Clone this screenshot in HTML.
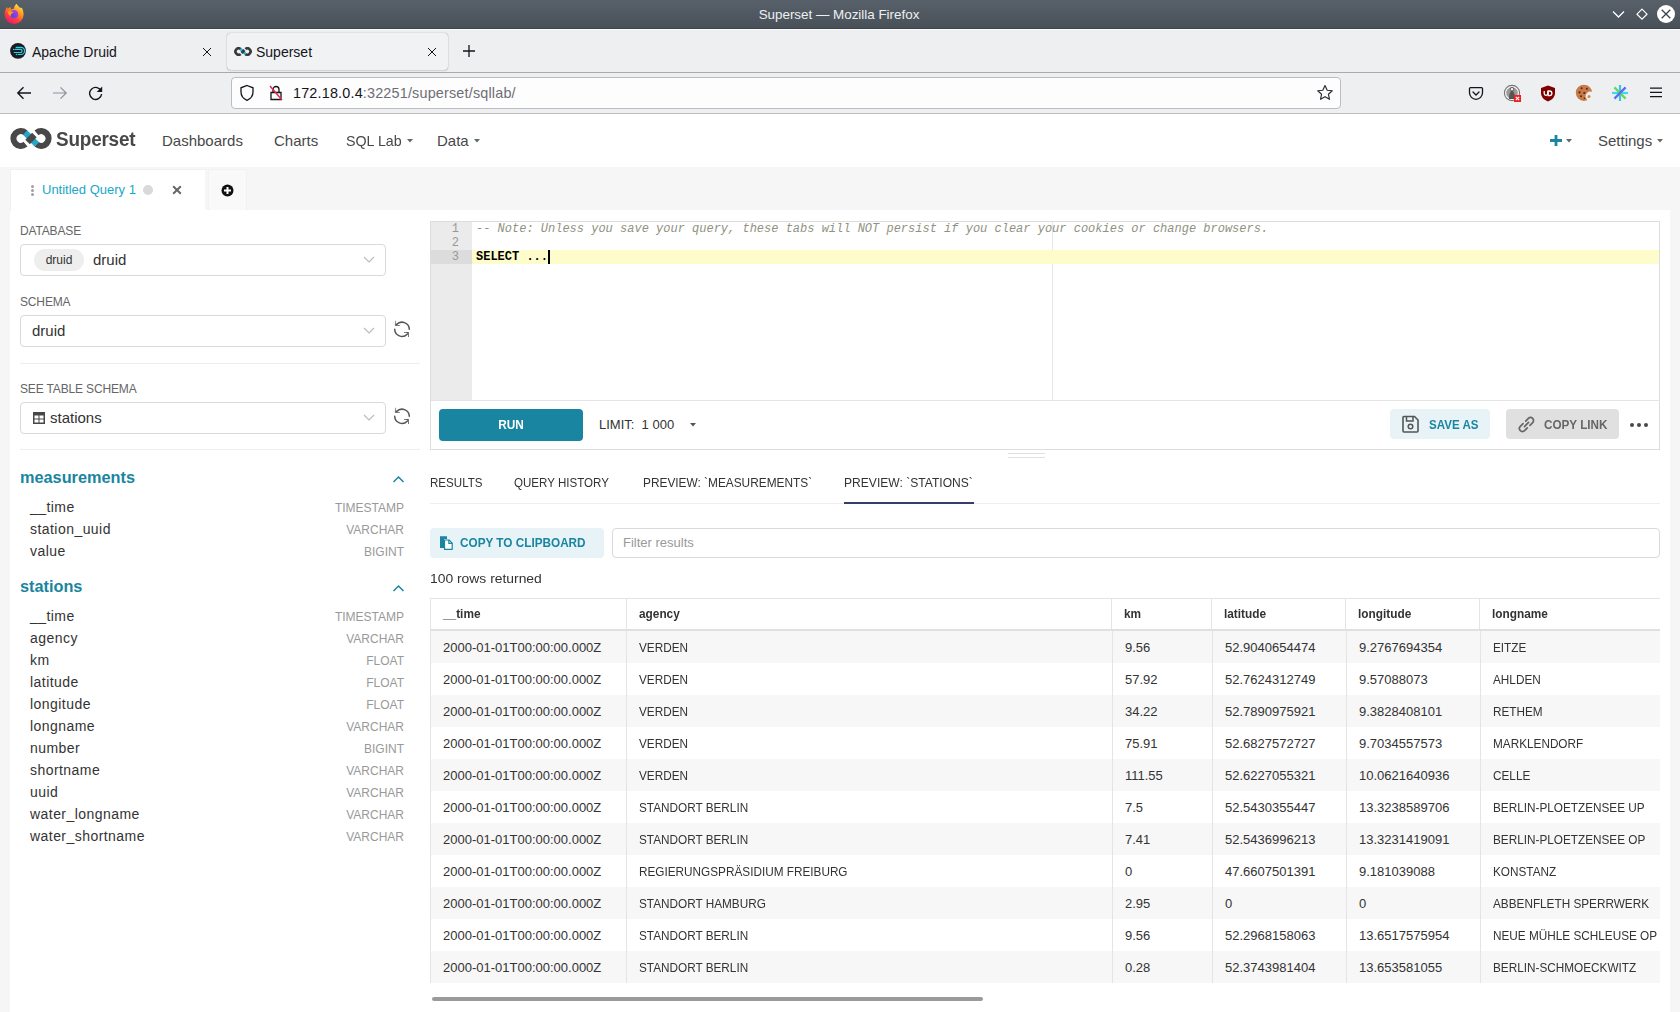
<!DOCTYPE html>
<html><head><meta charset="utf-8">
<style>
*{box-sizing:border-box;margin:0;padding:0}
html,body{width:1680px;height:1012px;overflow:hidden;background:#fff;font-family:"Liberation Sans",sans-serif;color:#333}
.a{position:absolute}
.nw{white-space:nowrap}
svg{display:block}
/* title bar */
#title{left:0;top:0;width:1680px;height:29px;background:linear-gradient(#58616a,#485058);border-bottom:1px solid #3c444c}
#title .t{left:0;width:1680px;top:7px;text-align:center;color:#eef0f2;font-size:13.4px;line-height:16px;padding-right:2px}
/* tab bar */
#tabs{left:0;top:29px;width:1680px;height:44px;background:#eeeff1;border-top:1px solid #fafbfa;border-bottom:1px solid #a9aaab}
#nav{left:0;top:73px;width:1680px;height:41px;background:#eeeff1;border-bottom:1px solid #bcbdc0}
.ff{font-size:14px;line-height:16px;color:#15141a}
#url{left:231px;top:77px;width:1110px;height:32px;background:#fdfdfd;border:1px solid #bcbdc0;border-radius:4px}
/* superset */
#hdr{left:0;top:114px;width:1680px;height:53px;background:#fff}
.menu{font-size:15px;line-height:17px;color:#484848;top:132px}
#qtabs{left:0;top:167px;width:1680px;height:43px;background:#f6f6f6}
#main{left:10px;top:210px;width:1660px;height:802px;background:#fff}
#gl{left:0;top:167px;width:10px;height:845px;background:#f6f6f6}
#gr{left:1670px;top:210px;width:10px;height:802px;background:#f6f6f6}
.lbl{font-size:12px;line-height:14px;color:#666;letter-spacing:-0.15px}
.sel{left:20px;width:366px;height:32px;border:1px solid #d9d9d9;border-radius:4px;background:#fff}
.col{left:30px;font-size:14px;line-height:16px;color:#333;letter-spacing:0.45px}
.typ{right:1276px;font-size:12px;line-height:14px;color:#999;text-align:right}
.tbh{font-size:16.3px;line-height:20px;color:#1985a0;font-weight:bold;left:20px}
/* editor */
#ed{left:430px;top:221px;width:1230px;height:229px;border:1px solid #ddd;background:#fff}
#gut{left:431px;top:222px;width:41px;height:178px;background:#ebebeb}
.mono{font-family:"Liberation Mono",monospace;font-size:12px;line-height:14px}
.ln{left:431px;width:28px;text-align:right;color:#999}
/* results */
.rtab{font-size:13px;line-height:15px;color:#333;top:475px;transform:scaleX(.89);transform-origin:0 0}
.th{font-size:13px;line-height:15px;font-weight:bold;color:#333;top:606px;transform:scaleX(.91);transform-origin:0 0}
.u{transform:scaleX(.905);transform-origin:0 0}
.td{font-size:13px;line-height:15px;color:#333}
.row{left:431px;width:1229px;height:32px}
.vl{width:1px;background:#e4e4e4}
</style></head><body>
<div id="title" class="a">
  <div class="a t">Superset — Mozilla Firefox</div>
  <!-- firefox logo -->
  <svg class="a" style="left:0;top:0" width="30" height="30"><defs><linearGradient id="ffg" x1="0.2" y1="1" x2="0.8" y2="0"><stop offset="0" stop-color="#f0106e"/><stop offset="0.35" stop-color="#ff4040"/><stop offset="0.65" stop-color="#ff9a1a"/><stop offset="1" stop-color="#ffe84a"/></linearGradient><radialGradient id="ffp" cx="0.4" cy="0.7" r="0.7"><stop offset="0" stop-color="#5a48d8"/><stop offset="1" stop-color="#b43ce8"/></radialGradient></defs>
<path d="M16.5 3.8 L19.5 7.5 L22 8 C23 10 23.6 12.5 23.6 14.6 A9.5 9.5 0 0 1 4.6 14.6 C4.6 11.5 5.6 9 7 7 L7.8 8.8 L10.2 7 L11 9.5 C12 9 13 8.8 13.8 8.8 C14.2 6.5 15.2 5 16.5 3.8 Z" fill="url(#ffg)"/>
<circle cx="14" cy="14.2" r="4.3" fill="url(#ffp)"/>
<path d="M7.5 11.5 C9.5 11 12 11.5 13.8 12.6 L11.5 13.5 C10.5 14.5 10.5 15.5 10.8 16.5 C9 15.5 8 13.5 7.5 11.5 Z" fill="#ffa010"/></svg>
  <svg class="a" style="left:1612px;top:10px" width="13" height="9"><path d="M1 1.5 L6.5 7 L12 1.5" stroke="#fff" stroke-width="1.3" fill="none"/></svg>
  <svg class="a" style="left:1635px;top:7px" width="14" height="14"><path d="M7 2.2 L12 7.2 L7 12.2 L2 7.2 Z" stroke="#fff" stroke-width="1.2" fill="none"/></svg>
  <div class="a" style="left:1657px;top:5px;width:18px;height:18px;border-radius:50%;background:#fff"></div>
  <svg class="a" style="left:1657px;top:5px" width="18" height="18"><path d="M4.7 4.7 L13.3 13.3 M13.3 4.7 L4.7 13.3" stroke="#3a4149" stroke-width="1.3"/></svg>
</div>
<div id="tabs" class="a">
  <!-- druid tab -->
  
  <svg class="a" style="left:6px;top:9px" width="24" height="24"><circle cx="12" cy="11.85" r="7.9" fill="#1c1b22"/><path d="M10.2 8.4 H15 A3.55 3.55 0 0 1 15 15.5 H12.3 M9.2 10.4 H14.5 A1.55 1.55 0 0 1 14.5 13.5 H8.2" stroke="#25d6e6" stroke-width="1.15" fill="none" stroke-linecap="round"/><circle cx="7.6" cy="10.4" r="0.75" fill="#25d6e6"/><circle cx="10.5" cy="15.5" r="0.75" fill="#25d6e6"/></svg>
  <div class="a ff nw" style="left:32px;top:14px">Apache Druid</div>
  <svg class="a" style="left:202px;top:17px" width="10" height="10"><path d="M1 1 L9 9 M9 1 L1 9" stroke="#15141a" stroke-width="1"/></svg>
  <!-- active tab -->
  <div class="a" style="left:227px;top:3px;width:221px;height:37px;background:#f1f2f4;border-radius:4px;box-shadow:0 0 1px 0 rgba(0,0,0,0.45),0 1px 2px rgba(0,0,0,0.1)"></div>
  <svg class="a" style="left:234px;top:17px" width="18" height="9" viewBox="0 0 42 21"><path d="M15.49 4.91 A7.3 7.3 0 1 0 15.49 16.09 M26.51 4.91 A7.3 7.3 0 1 1 26.51 16.09" stroke="#3a3a3a" stroke-width="6.2" fill="none"/><path d="M15.2 4.6 L26.8 16.4" stroke="#1bb4df" stroke-width="6.2"/><path d="M17.6 13.9 L24.4 7.1" stroke="#3a3a3a" stroke-width="6.4"/></svg>
  <div class="a ff nw" style="left:256px;top:14px">Superset</div>
  <svg class="a" style="left:427px;top:17px" width="10" height="10"><path d="M1 1 L9 9 M9 1 L1 9" stroke="#15141a" stroke-width="1"/></svg>
  <svg class="a" style="left:462px;top:14px" width="14" height="14"><path d="M7 1 V13 M1 7 H13" stroke="#15141a" stroke-width="1.3"/></svg>
</div>
<div id="nav" class="a">
  <svg class="a" style="left:16px;top:13px" width="16" height="14"><path d="M15 7 H2 M7.5 1.3 L1.8 7 L7.5 12.7" stroke="#15141a" stroke-width="1.4" fill="none"/></svg>
  <svg class="a" style="left:52px;top:13px" width="16" height="14"><path d="M1 7 H14 M8.5 1.3 L14.2 7 L8.5 12.7" stroke="#8f8f9d" stroke-width="1.2" fill="none"/></svg>
  <svg class="a" style="left:88px;top:12px" width="16" height="16"><path d="M13.3 6.5 A6 6 0 1 0 13.6 9" stroke="#15141a" stroke-width="1.4" fill="none"/><path d="M14.2 1.5 V7 H8.7 Z" fill="#15141a"/></svg>
</div>
<div id="url" class="a">
  <svg class="a" style="left:7px;top:6px" width="16" height="18"><path d="M8 1.5 L14 3.8 V8 C14 12 11.5 14.8 8 16.3 C4.5 14.8 2 12 2 8 V3.8 Z" stroke="#15141a" stroke-width="1.3" fill="none"/></svg>
  <svg class="a" style="left:36px;top:6px" width="16" height="18"><path d="M5 8 V5.5 A3 3 0 0 1 11 5.5 V8 M3 8.5 H13 V15.5 H3 Z" stroke="#15141a" stroke-width="1.3" fill="none"/><path d="M2 2 L14 16" stroke="#e22850" stroke-width="1.5"/></svg>
  <div class="a nw" style="left:61px;top:7px;font-size:14.4px;line-height:16px;color:#15141a;letter-spacing:0.18px">172.18.0.4<span style="color:#6d6d75">:32251/superset/sqllab/</span></div>
  <svg class="a" style="left:1084px;top:6px" width="18" height="18"><path d="M9 1.5 L11.2 6.3 L16.3 6.8 L12.4 10.2 L13.5 15.3 L9 12.7 L4.5 15.3 L5.6 10.2 L1.7 6.8 L6.8 6.3 Z" stroke="#2b2a33" stroke-width="1.15" fill="none" stroke-linejoin="round"/></svg>
</div>
<!-- extension icons -->
<svg class="a" style="left:1468px;top:86px" width="16" height="15"><path d="M2.5 1.6 H13.5 A1 1 0 0 1 14.5 2.6 V6.8 A6.5 6.5 0 0 1 1.5 6.8 V2.6 A1 1 0 0 1 2.5 1.6 Z" stroke="#15141a" stroke-width="1.3" fill="none"/><path d="M5 6 L8 9 L11 6" stroke="#15141a" stroke-width="1.3" fill="none" stroke-linecap="round"/></svg>
<svg class="a" style="left:1503px;top:84px" width="18" height="18"><circle cx="9" cy="9" r="7.6" fill="#f4f4f4" stroke="#777" stroke-width="1.1"/><circle cx="9" cy="9" r="5.8" fill="#9a9a9a"/><path d="M6 15 C6 10 7 8 9 6 C11 8 12 10 12 15 Z" fill="#555"/><circle cx="9" cy="5.2" r="1.8" fill="#eee" stroke="#555" stroke-width="0.9"/></svg>
<svg class="a" style="left:1514px;top:95px" width="7" height="7"><rect width="7" height="7" fill="#f01e1e"/><path d="M1.8 1.8 L5.2 5.2 M5.2 1.8 L1.8 5.2" stroke="#fff" stroke-width="1.1"/></svg>
<svg class="a" style="left:1540px;top:85px" width="16" height="17"><path d="M8 0.5 L15 3 V8 C15 12 12 15 8 16.5 C4 15 1 12 1 8 V3 Z" fill="#800000"/><path d="M4.2 6 V8.6 A1.8 1.8 0 0 0 7.8 8.6 V6" stroke="#fff" stroke-width="1.3" fill="none"/><path d="M8.2 6 H9.6 A2.3 2.3 0 0 1 9.6 10.6 H8.2 Z" stroke="#fff" stroke-width="1.3" fill="none"/></svg>
<svg class="a" style="left:1574px;top:83px" width="20" height="20"><defs><mask id="bite"><rect width="20" height="20" fill="#fff"/><circle cx="16.2" cy="13.2" r="4.6" fill="#000"/></mask></defs><circle cx="9.9" cy="9.85" r="8.1" fill="#c97a45" mask="url(#bite)"/><circle cx="15" cy="13.4" r="1.5" fill="#d4854a"/><g fill="#4a2a2a"><circle cx="7.6" cy="5.3" r="1"/><circle cx="12.9" cy="5.7" r="1"/><circle cx="5.5" cy="9.4" r="1.1"/><circle cx="10.3" cy="10" r="1.1"/><circle cx="7" cy="13.2" r="1"/><circle cx="10.5" cy="15.3" r="0.8"/></g></svg>
<svg class="a" style="left:1611px;top:84px" width="18" height="18"><path d="M9 1 V17" stroke="#37c5e8" stroke-width="2.2"/><path d="M1 9 H17" stroke="#3dd9f2" stroke-width="2.2"/><path d="M3.4 3.4 L14.6 14.6" stroke="#63d85c" stroke-width="2.2"/><path d="M14.6 3.4 L3.4 14.6" stroke="#5b6df0" stroke-width="2.2"/></svg>
<svg class="a" style="left:1649px;top:86px" width="14" height="12"><path d="M1 2.1 H13 M1 6.4 H13 M1 10.7 H13" stroke="#15141a" stroke-width="1.25"/></svg>

<div id="hdr" class="a">
  <svg class="a" style="left:10px;top:14px" width="42" height="21" viewBox="0 0 42 21"><path d="M15.49 4.91 A7.3 7.3 0 1 0 15.49 16.09 M26.51 4.91 A7.3 7.3 0 1 1 26.51 16.09" stroke="#484848" stroke-width="6.2" fill="none"/><path d="M15.2 4.6 L26.8 16.4" stroke="#20a7c9" stroke-width="6.2"/><path d="M17.6 13.9 L24.4 7.1" stroke="#484848" stroke-width="6.4"/></svg>
  <div class="a nw" style="left:56px;top:14px;font-size:19.6px;line-height:22px;font-weight:bold;color:#484848;letter-spacing:-0.2px;transform:scaleX(.965);transform-origin:0 0">Superset</div>
</div>
<div class="a menu nw" style="left:162px">Dashboards</div>
<div class="a menu nw" style="left:274px">Charts</div>
<div class="a menu nw" style="left:346px;transform:scaleX(.95);transform-origin:0 0">SQL Lab</div>
<svg class="a" style="left:407px;top:139px" width="6" height="4"><path d="M0 0 H6 L3 3.5 Z" fill="#666"/></svg>
<div class="a menu nw" style="left:437px">Data</div>
<svg class="a" style="left:474px;top:139px" width="6" height="4"><path d="M0 0 H6 L3 3.5 Z" fill="#666"/></svg>
<svg class="a" style="left:1550px;top:135px" width="12" height="11"><path d="M6 0 V11 M0 5.5 H12" stroke="#1985a0" stroke-width="2.8"/></svg>
<svg class="a" style="left:1566px;top:139px" width="6" height="4"><path d="M0 0 H6 L3 3.5 Z" fill="#666"/></svg>
<div class="a menu nw" style="left:1598px">Settings</div>
<svg class="a" style="left:1657px;top:139px" width="6" height="4"><path d="M0 0 H6 L3 3.5 Z" fill="#666"/></svg>

<div id="qtabs" class="a"></div>
<div id="gl" class="a"></div>
<div id="gr" class="a"></div>
<div id="main" class="a"></div>
<!-- query tab -->
<div class="a" style="left:10px;top:169px;width:195px;height:42px;background:#fff;border-top:1px solid #f0f0f0;border-left:1px solid #f0f0f0"></div>
<div class="a" style="left:31px;top:185px;width:3px;height:3px;border-radius:50%;background:#a0a0a0"></div>
<div class="a" style="left:31px;top:189px;width:3px;height:3px;border-radius:50%;background:#a0a0a0"></div>
<div class="a" style="left:31px;top:193px;width:3px;height:3px;border-radius:50%;background:#a0a0a0"></div>
<div class="a nw" style="left:42px;top:182px;font-size:13px;line-height:15px;color:#20a7c9">Untitled Query 1</div>
<div class="a" style="left:143px;top:185px;width:10px;height:10px;border-radius:50%;background:#d9d9d9"></div>
<svg class="a" style="left:172px;top:185px" width="10" height="10"><path d="M1.2 1.2 L8.8 8.8 M8.8 1.2 L1.2 8.8" stroke="#666" stroke-width="2"/></svg>
<div class="a" style="left:208px;top:169px;width:39px;height:41px;background:#f9f9f9;border:1px solid #f2f2f2;border-bottom:none"></div>
<svg class="a" style="left:221px;top:184px" width="13" height="13"><circle cx="6.5" cy="6.5" r="6" fill="#111"/><path d="M6.5 3 V10 M3 6.5 H10" stroke="#fff" stroke-width="2"/></svg>

<!-- left panel -->
<div class="a lbl nw" style="left:20px;top:224px">DATABASE</div>
<div class="a sel" style="top:244px"></div>
<div class="a nw" style="left:34px;top:249px;width:50px;height:22px;border-radius:11px;background:#eee;font-size:12px;line-height:22px;text-align:center;color:#333">druid</div>
<div class="a nw" style="left:93px;top:251px;font-size:15px;line-height:17px;color:#333">druid</div>
<svg class="a" style="left:363px;top:256px" width="12" height="8"><path d="M1 1 L6 6 L11 1" stroke="#bbb" stroke-width="1.1" fill="none"/></svg>

<div class="a lbl nw" style="left:20px;top:295px">SCHEMA</div>
<div class="a sel" style="top:315px"></div>
<div class="a nw" style="left:32px;top:322px;font-size:15px;line-height:17px;color:#333">druid</div>
<svg class="a" style="left:363px;top:327px" width="12" height="8"><path d="M1 1 L6 6 L11 1" stroke="#bbb" stroke-width="1.1" fill="none"/></svg>
<svg class="a" style="left:393px;top:320px" width="18" height="18"><path d="M16.3 9.3 A7.3 7.3 0 0 0 3.6 4.6 M1.7 9.3 A7.3 7.3 0 0 0 14.2 14.2" stroke="#555" stroke-width="1.5" fill="none" stroke-linecap="round"/><path d="M2 0.8 L2.6 0.8 L2.6 5 L6.8 5 L6.8 5.8 L1.9 5.8 Z M2.8 3.2 L2.8 5 L5 5 Z" fill="#555"/><path d="M11 12 L15.8 12 L15.8 16.9 L15 16.9 L15 12.8 L11 12.8 Z M13.5 12.8 L15 12.8 L15 14.3 Z" fill="#555"/></svg>
<div class="a" style="left:20px;top:363px;width:400px;height:1px;background:#eee"></div>

<div class="a lbl nw" style="left:20px;top:382px">SEE TABLE SCHEMA</div>
<div class="a sel" style="top:402px"></div>
<svg class="a" style="left:33px;top:412px" width="12" height="12"><rect x="0" y="0" width="12" height="12" fill="#484848"/><rect x="1.5" y="3.5" width="4" height="3" fill="#fff"/><rect x="6.5" y="3.5" width="4" height="3" fill="#fff"/><rect x="1.5" y="7.5" width="4" height="3" fill="#fff"/><rect x="6.5" y="7.5" width="4" height="3" fill="#fff"/></svg>
<div class="a nw" style="left:50px;top:409px;font-size:15px;line-height:17px;color:#333">stations</div>
<svg class="a" style="left:363px;top:414px" width="12" height="8"><path d="M1 1 L6 6 L11 1" stroke="#bbb" stroke-width="1.1" fill="none"/></svg>
<svg class="a" style="left:393px;top:407px" width="18" height="18"><path d="M16.3 9.3 A7.3 7.3 0 0 0 3.6 4.6 M1.7 9.3 A7.3 7.3 0 0 0 14.2 14.2" stroke="#555" stroke-width="1.5" fill="none" stroke-linecap="round"/><path d="M2 0.8 L2.6 0.8 L2.6 5 L6.8 5 L6.8 5.8 L1.9 5.8 Z M2.8 3.2 L2.8 5 L5 5 Z" fill="#555"/><path d="M11 12 L15.8 12 L15.8 16.9 L15 16.9 L15 12.8 L11 12.8 Z M13.5 12.8 L15 12.8 L15 14.3 Z" fill="#555"/></svg>
<div class="a" style="left:20px;top:449px;width:400px;height:1px;background:#eee"></div>

<div class="a tbh nw" style="top:467px">measurements</div>
<svg class="a" style="left:392px;top:475px" width="13" height="9"><path d="M1.5 7 L6.5 2 L11.5 7" stroke="#1985a0" stroke-width="1.5" fill="none"/></svg>
<div class="a col nw" style="top:499px">__time</div><div class="a typ nw" style="top:501px">TIMESTAMP</div>
<div class="a col nw" style="top:521px">station_uuid</div><div class="a typ nw" style="top:523px">VARCHAR</div>
<div class="a col nw" style="top:543px">value</div><div class="a typ nw" style="top:545px">BIGINT</div>

<div class="a tbh nw" style="top:576px">stations</div>
<svg class="a" style="left:392px;top:584px" width="13" height="9"><path d="M1.5 7 L6.5 2 L11.5 7" stroke="#1985a0" stroke-width="1.5" fill="none"/></svg>
<div class="a col nw" style="top:608px">__time</div><div class="a typ nw" style="top:610px">TIMESTAMP</div>
<div class="a col nw" style="top:630px">agency</div><div class="a typ nw" style="top:632px">VARCHAR</div>
<div class="a col nw" style="top:652px">km</div><div class="a typ nw" style="top:654px">FLOAT</div>
<div class="a col nw" style="top:674px">latitude</div><div class="a typ nw" style="top:676px">FLOAT</div>
<div class="a col nw" style="top:696px">longitude</div><div class="a typ nw" style="top:698px">FLOAT</div>
<div class="a col nw" style="top:718px">longname</div><div class="a typ nw" style="top:720px">VARCHAR</div>
<div class="a col nw" style="top:740px">number</div><div class="a typ nw" style="top:742px">BIGINT</div>
<div class="a col nw" style="top:762px">shortname</div><div class="a typ nw" style="top:764px">VARCHAR</div>
<div class="a col nw" style="top:784px">uuid</div><div class="a typ nw" style="top:786px">VARCHAR</div>
<div class="a col nw" style="top:806px">water_longname</div><div class="a typ nw" style="top:808px">VARCHAR</div>
<div class="a col nw" style="top:828px">water_shortname</div><div class="a typ nw" style="top:830px">VARCHAR</div>

<!-- editor -->
<div id="ed" class="a"></div>
<div id="gut" class="a"></div>
<div class="a" style="left:1052px;top:222px;width:1px;height:178px;background:#e8e8e8"></div>
<div class="a" style="left:472px;top:250px;width:1187px;height:14px;background:#fffccc"></div>
<div class="a" style="left:431px;top:250px;width:41px;height:14px;background:#dcdcdc"></div>
<div class="a mono ln" style="top:222px">1</div>
<div class="a mono ln" style="top:236px">2</div>
<div class="a mono ln" style="top:250px">3</div>
<div class="a mono nw" style="left:476px;top:222px;color:#909281;font-style:italic">-- Note: Unless you save your query, these tabs will NOT persist if you clear your cookies or change browsers.</div>
<div class="a mono nw" style="left:476px;top:250px;color:#000;font-weight:bold">SELECT ...</div>
<div class="a" style="left:548px;top:250px;width:2px;height:14px;background:#000"></div>
<div class="a" style="left:431px;top:400px;width:1229px;height:1px;background:#e4e4e4"></div>

<div class="a" style="left:439px;top:409px;width:144px;height:32px;background:#1a85a0;border-radius:4px;color:#fff;font-size:13px;line-height:32px;font-weight:bold;text-align:center"><span style="display:inline-block;transform:scaleX(.91)">RUN</span></div>
<div class="a nw" style="left:599px;top:417px;font-size:13px;line-height:15px;color:#333">LIMIT:&nbsp; 1 000</div>
<svg class="a" style="left:690px;top:423px" width="6" height="4"><path d="M0 0 H6 L3 3.5 Z" fill="#555"/></svg>

<div class="a" style="left:1390px;top:409px;width:100px;height:30px;background:#e7f3f7;border-radius:4px"></div>
<svg class="a" style="left:1401px;top:415px" width="19" height="19"><path d="M2 2.5 A1 1 0 0 1 3 1.5 H13.5 L17 5 V16 A1 1 0 0 1 16 17 H3 A1 1 0 0 1 2 16 Z" stroke="#555" stroke-width="1.6" fill="none"/><path d="M5.5 1.5 V6 H12 V1.5" stroke="#555" stroke-width="1.5" fill="none"/><circle cx="9.5" cy="11.5" r="2.3" stroke="#555" stroke-width="1.5" fill="none"/></svg>
<div class="a nw" style="left:1429px;top:417px;font-size:13px;line-height:15px;color:#1985a0;font-weight:bold;transform:scaleX(.89);transform-origin:0 0">SAVE AS</div>
<div class="a" style="left:1506px;top:409px;width:113px;height:30px;background:#e0e0e0;border-radius:4px"></div>
<svg class="a" style="left:1517px;top:415px" width="19" height="19"><g transform="rotate(-45 9.5 9.5)" stroke="#666" stroke-width="1.7" fill="none" stroke-linecap="round"><path d="M7.6 6.5 H3.8 A3 3 0 0 0 3.8 12.5 H7.6"/><path d="M11.4 6.5 H15.2 A3 3 0 0 1 15.2 12.5 H11.4"/><path d="M6.6 9.5 H12.4"/></g></svg>
<div class="a nw" style="left:1544px;top:417px;font-size:13px;line-height:15px;color:#666;font-weight:bold;transform:scaleX(.90);transform-origin:0 0">COPY LINK</div>
<div class="a" style="left:1630px;top:423px;width:4px;height:4px;border-radius:50%;background:#484848"></div>
<div class="a" style="left:1637px;top:423px;width:4px;height:4px;border-radius:50%;background:#484848"></div>
<div class="a" style="left:1644px;top:423px;width:4px;height:4px;border-radius:50%;background:#484848"></div>

<div class="a" style="left:1008px;top:453px;width:37px;height:1px;background:#e0e0e0"></div>
<div class="a" style="left:1008px;top:457px;width:37px;height:1px;background:#e0e0e0"></div>

<!-- result tabs -->
<div class="a" style="left:430px;top:503px;width:1230px;height:1px;background:#eee"></div>
<div class="a rtab nw" style="left:430px">RESULTS</div>
<div class="a rtab nw" style="left:514px">QUERY HISTORY</div>
<div class="a rtab nw" style="left:643px;transform:scaleX(.912)">PREVIEW: `MEASUREMENTS`</div>
<div class="a rtab nw" style="left:844px;transform:scaleX(.929)">PREVIEW: `STATIONS`</div>
<div class="a" style="left:844px;top:502px;width:130px;height:2px;background:#323f6b"></div>

<div class="a" style="left:430px;top:528px;width:174px;height:30px;background:#e7f3f7;border-radius:4px"></div>
<svg class="a" style="left:439px;top:535px" width="15" height="16"><path d="M1 1.2 H8 V4 H5 V13 H1 Z" fill="#1985a0"/><path d="M5.5 5 H10 L13.2 8.2 V14.3 H5.5 Z" fill="#fff" stroke="#1985a0" stroke-width="1.2" stroke-linejoin="round"/><path d="M9.8 5 V8.4 H13.2" fill="none" stroke="#1985a0" stroke-width="1.1"/><path d="M5 4.5 H9.8 L13.7 8.4 V4.5" fill="none"/></svg>
<div class="a nw" style="left:460px;top:535px;font-size:13px;line-height:15px;color:#1985a0;font-weight:bold;transform:scaleX(.904);transform-origin:0 0">COPY TO CLIPBOARD</div>
<div class="a" style="left:612px;top:528px;width:1048px;height:30px;border:1px solid #d9d9d9;border-radius:4px"></div>
<div class="a nw" style="left:623px;top:535px;font-size:13px;line-height:15px;color:#999">Filter results</div>
<div class="a nw" style="left:430px;top:571px;font-size:13px;line-height:15px;color:#333;transform:scaleX(1.067);transform-origin:0 0">100 rows returned</div>

<!-- table -->
<div id="tbl">
<div class="a" style="left:430px;top:598px;width:1230px;height:385px;border-left:1px solid #e4e4e4;overflow:hidden">
</div>
<div class="a" style="left:430px;top:598px;width:1230px;height:1px;background:#e4e4e4"></div>
<div class="a" style="left:430px;top:629px;width:1230px;height:2px;background:#e0e0e0"></div>
<div class="a row" style="top:631px;background:#f7f7f7"></div>
<div class="a row" style="top:663px;background:#fff"></div>
<div class="a row" style="top:695px;background:#f7f7f7"></div>
<div class="a row" style="top:727px;background:#fff"></div>
<div class="a row" style="top:759px;background:#f7f7f7"></div>
<div class="a row" style="top:791px;background:#fff"></div>
<div class="a row" style="top:823px;background:#f7f7f7"></div>
<div class="a row" style="top:855px;background:#fff"></div>
<div class="a row" style="top:887px;background:#f7f7f7"></div>
<div class="a row" style="top:919px;background:#fff"></div>
<div class="a row" style="top:951px;background:#f7f7f7"></div>
<div class="a vl" style="left:626px;top:598px;height:31px"></div>
<div class="a vl" style="left:626px;top:631px;height:352px"></div>
<div class="a vl" style="left:1111px;top:598px;height:31px"></div>
<div class="a vl" style="left:1112px;top:631px;height:352px"></div>
<div class="a vl" style="left:1211px;top:598px;height:31px"></div>
<div class="a vl" style="left:1212px;top:631px;height:352px"></div>
<div class="a vl" style="left:1345px;top:598px;height:31px"></div>
<div class="a vl" style="left:1346px;top:631px;height:352px"></div>
<div class="a vl" style="left:1479px;top:598px;height:31px"></div>
<div class="a vl" style="left:1480px;top:631px;height:352px"></div>
<div class="a th nw" style="left:443px">__time</div>
<div class="a th nw" style="left:639px">agency</div>
<div class="a th nw" style="left:1124px">km</div>
<div class="a th nw" style="left:1224px">latitude</div>
<div class="a th nw" style="left:1358px">longitude</div>
<div class="a th nw" style="left:1492px">longname</div>
<div class="a td nw" style="left:443px;top:640px">2000-01-01T00:00:00.000Z</div>
<div class="a td nw u" style="left:639px;top:640px">VERDEN</div>
<div class="a td nw" style="left:1125px;top:640px">9.56</div>
<div class="a td nw" style="left:1225px;top:640px">52.9040654474</div>
<div class="a td nw" style="left:1359px;top:640px">9.2767694354</div>
<div class="a td nw u" style="left:1493px;top:640px">EITZE</div>
<div class="a td nw" style="left:443px;top:672px">2000-01-01T00:00:00.000Z</div>
<div class="a td nw u" style="left:639px;top:672px">VERDEN</div>
<div class="a td nw" style="left:1125px;top:672px">57.92</div>
<div class="a td nw" style="left:1225px;top:672px">52.7624312749</div>
<div class="a td nw" style="left:1359px;top:672px">9.57088073</div>
<div class="a td nw u" style="left:1493px;top:672px">AHLDEN</div>
<div class="a td nw" style="left:443px;top:704px">2000-01-01T00:00:00.000Z</div>
<div class="a td nw u" style="left:639px;top:704px">VERDEN</div>
<div class="a td nw" style="left:1125px;top:704px">34.22</div>
<div class="a td nw" style="left:1225px;top:704px">52.7890975921</div>
<div class="a td nw" style="left:1359px;top:704px">9.3828408101</div>
<div class="a td nw u" style="left:1493px;top:704px">RETHEM</div>
<div class="a td nw" style="left:443px;top:736px">2000-01-01T00:00:00.000Z</div>
<div class="a td nw u" style="left:639px;top:736px">VERDEN</div>
<div class="a td nw" style="left:1125px;top:736px">75.91</div>
<div class="a td nw" style="left:1225px;top:736px">52.6827572727</div>
<div class="a td nw" style="left:1359px;top:736px">9.7034557573</div>
<div class="a td nw u" style="left:1493px;top:736px">MARKLENDORF</div>
<div class="a td nw" style="left:443px;top:768px">2000-01-01T00:00:00.000Z</div>
<div class="a td nw u" style="left:639px;top:768px">VERDEN</div>
<div class="a td nw" style="left:1125px;top:768px">111.55</div>
<div class="a td nw" style="left:1225px;top:768px">52.6227055321</div>
<div class="a td nw" style="left:1359px;top:768px">10.0621640936</div>
<div class="a td nw u" style="left:1493px;top:768px">CELLE</div>
<div class="a td nw" style="left:443px;top:800px">2000-01-01T00:00:00.000Z</div>
<div class="a td nw u" style="left:639px;top:800px">STANDORT BERLIN</div>
<div class="a td nw" style="left:1125px;top:800px">7.5</div>
<div class="a td nw" style="left:1225px;top:800px">52.5430355447</div>
<div class="a td nw" style="left:1359px;top:800px">13.3238589706</div>
<div class="a td nw u" style="left:1493px;top:800px">BERLIN-PLOETZENSEE UP</div>
<div class="a td nw" style="left:443px;top:832px">2000-01-01T00:00:00.000Z</div>
<div class="a td nw u" style="left:639px;top:832px">STANDORT BERLIN</div>
<div class="a td nw" style="left:1125px;top:832px">7.41</div>
<div class="a td nw" style="left:1225px;top:832px">52.5436996213</div>
<div class="a td nw" style="left:1359px;top:832px">13.3231419091</div>
<div class="a td nw u" style="left:1493px;top:832px">BERLIN-PLOETZENSEE OP</div>
<div class="a td nw" style="left:443px;top:864px">2000-01-01T00:00:00.000Z</div>
<div class="a td nw u" style="left:639px;top:864px">REGIERUNGSPRÄSIDIUM FREIBURG</div>
<div class="a td nw" style="left:1125px;top:864px">0</div>
<div class="a td nw" style="left:1225px;top:864px">47.6607501391</div>
<div class="a td nw" style="left:1359px;top:864px">9.181039088</div>
<div class="a td nw u" style="left:1493px;top:864px">KONSTANZ</div>
<div class="a td nw" style="left:443px;top:896px">2000-01-01T00:00:00.000Z</div>
<div class="a td nw u" style="left:639px;top:896px">STANDORT HAMBURG</div>
<div class="a td nw" style="left:1125px;top:896px">2.95</div>
<div class="a td nw" style="left:1225px;top:896px">0</div>
<div class="a td nw" style="left:1359px;top:896px">0</div>
<div class="a td nw u" style="left:1493px;top:896px">ABBENFLETH SPERRWERK</div>
<div class="a td nw" style="left:443px;top:928px">2000-01-01T00:00:00.000Z</div>
<div class="a td nw u" style="left:639px;top:928px">STANDORT BERLIN</div>
<div class="a td nw" style="left:1125px;top:928px">9.56</div>
<div class="a td nw" style="left:1225px;top:928px">52.2968158063</div>
<div class="a td nw" style="left:1359px;top:928px">13.6517575954</div>
<div class="a td nw u" style="left:1493px;top:928px">NEUE MÜHLE SCHLEUSE OP</div>
<div class="a td nw" style="left:443px;top:960px">2000-01-01T00:00:00.000Z</div>
<div class="a td nw u" style="left:639px;top:960px">STANDORT BERLIN</div>
<div class="a td nw" style="left:1125px;top:960px">0.28</div>
<div class="a td nw" style="left:1225px;top:960px">52.3743981404</div>
<div class="a td nw" style="left:1359px;top:960px">13.653581055</div>
<div class="a td nw u" style="left:1493px;top:960px">BERLIN-SCHMOECKWITZ</div>
<div class="a" style="left:432px;top:997px;width:551px;height:4px;border-radius:2px;background:#9a9a9a"></div>
</div>
</body></html>
